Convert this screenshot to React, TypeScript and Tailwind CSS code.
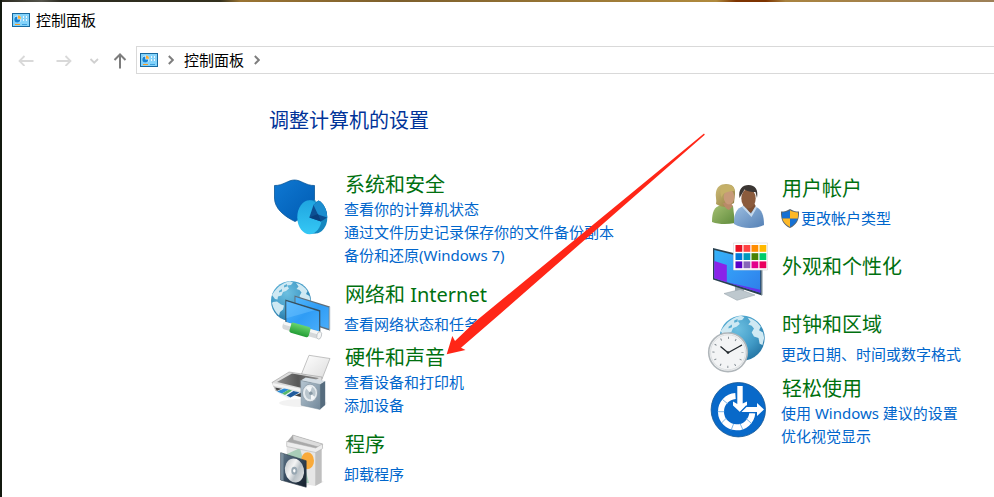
import type { ReactNode } from "react";

const tiles = [
  ["#e81123", "#ff4343", "#ff8c00", "#ffb900"],
  ["#0078d7", "#0099bc", "#498205", "#00cc6a"],
  ["#5a00c8", "#8764b8", "#e3008c", "#ea005e"],
];

const App = () => {
  return (
    <div className="relative min-h-screen overflow-hidden bg-[#13190f] pl-0.5 font-['Noto_Sans','Noto_Sans_CJK_SC',sans-serif] text-[15px] text-black">
      <div className="h-0.5 bg-[linear-gradient(90deg,#2b2a20_0%,#55544c_4%,#2b2a20_6%,#33301d_22%,#9a7433_24%,#7d5f2c_40%,#b08a3d_72%,#7d3300_74%,#7d3300_77%,#a98340_79%,#9d8058_100%)]" />
      <div className="min-h-[calc(100vh-2px)] bg-white">
        <header className="flex h-9 items-center gap-1.5 pl-2.5">
          <PanelIcon />
          <span className="leading-5">控制面板</span>
        </header>
        <Toolbar />
        <main className="pt-[34px]">
          <h1 className="pl-[267px] text-xl leading-[26px] text-[#003399]">
            调整计算机的设置
          </h1>
          <div className="mt-[37px] grid grid-cols-[1fr_289px] pl-[266px]">
            <div className="pt-px">
              <Category
                title="系统和安全"
                icon={<SecurityIcon />}
                links={[
                  "查看你的计算机状态",
                  "通过文件历史记录保存你的文件备份副本",
                  "备份和还原(Windows 7)",
                ]}
                className="items-start"
              />
              <Category
                title="网络和 Internet"
                icon={<NetworkIcon />}
                links={["查看网络状态和任务"]}
                className="mt-2.5 items-center"
              />
              <Category
                title="硬件和声音"
                icon={<HardwareIcon />}
                links={["查看设备和打印机", "添加设备"]}
                className="mt-1 items-center"
              />
              <Category
                title="程序"
                icon={<ProgramsIcon />}
                links={["卸载程序"]}
                className="mt-2.5 items-center"
              />
            </div>
            <div>
              <Category
                title="用户帐户"
                icon={<UsersIcon />}
                links={["更改帐户类型"]}
                shield
                className="items-center"
              />
              <Category
                title="外观和个性化"
                icon={<AppearanceIcon />}
                links={[]}
                className="items-center"
              />
              <Category
                title="时钟和区域"
                icon={<ClockIcon />}
                links={["更改日期、时间或数字格式"]}
                className="mt-2 items-center"
              />
              <Category
                title="轻松使用"
                icon={<EaseIcon />}
                links={["使用 Windows 建议的设置", "优化视觉显示"]}
                className="mt-[5px] items-center"
              />
            </div>
          </div>
        </main>
      </div>
      {/* red pointer drawn over the categories */}
      <svg
        className="pointer-events-none absolute top-[133px] left-[446px]"
        width="260"
        height="223"
        viewBox="446 133 260 223"
        fill="#ff2617"
      >
        <path d="M446.7 354.3 452.3 336 455 341 476 321 704 133.6 704.8 134.8 500 314 461 347.7 465.5 350Z" />
      </svg>
    </div>
  );
};
export default App;

const Toolbar = () => {
  return (
    <nav className="mt-2 flex h-7 items-stretch pl-2">
      <div className="mr-1 flex items-center gap-1.5">
        <button aria-label="后退" className="flex h-7 w-8 items-center justify-center">
          <svg width="16" height="12" viewBox="0 0 16 12" fill="none" stroke="#d9d9d9" strokeWidth="1.8">
            <path d="M15.5 7H1.5M6.5 2 1.5 7l5 5" />
          </svg>
        </button>
        <button aria-label="前进" className="flex h-7 w-8 items-center justify-center">
          <svg width="16" height="12" viewBox="0 0 16 12" fill="none" stroke="#d9d9d9" strokeWidth="1.8">
            <path d="M.5 7h14M9.5 2l5 5-5 5" />
          </svg>
        </button>
        <button aria-label="最近浏览的位置" className="flex h-7 w-4 items-center justify-center">
          <svg width="10" height="8" viewBox="0 0 10 8" fill="none" stroke="#d0d0d0" strokeWidth="1.8">
            <path d="m1.5 3 3.7 3.7L9 3" />
          </svg>
        </button>
        <button aria-label="上移" className="flex h-7 w-6 items-center justify-center">
          <svg width="14" height="18" viewBox="0 0 14 18" fill="none" stroke="#7d7d7d" strokeWidth="2">
            <path d="M7 17.500V4M1.500 9 7 3.500 12.500 9" />
          </svg>
        </button>
      </div>
      <div className="flex flex-1 items-center border border-r-0 border-[#d9d9d9] pb-px pl-[3px]">
        <PanelIcon />
        <Chevron />
        <button className="leading-5">控制面板</button>
        <Chevron />
      </div>
    </nav>
  );
};

const Chevron = () => {
  return (
    <svg className="mx-2.5 shrink-0" width="6" height="10" viewBox="0 0 6 10" fill="none" stroke="#7d7d7d" strokeWidth="1.9">
      <path d="m.8 1 4 4-4 4" />
    </svg>
  );
};

type CategoryProps = {
  title: string;
  icon: ReactNode;
  links: string[];
  shield?: boolean;
  className: string;
};
const Category = ({ title, icon, links, shield, className }: CategoryProps) => {
  return (
    <section className={`flex gap-3 ${className}`}>
      {icon}
      <div>
        <h2 className="pl-px text-xl leading-[26px] text-[#00700f]">
          <a href="#">{title}</a>
        </h2>
        {links.length > 0 && (
          <ul className={links.length === 1 ? "mt-[5px]" : ""}>
            {links.map((link) => (
              <li key={link} className="flex items-center gap-0.5 leading-[23px] whitespace-nowrap text-[#0066cc]">
                {shield && <UacShield />}
                <a href="#">{link}</a>
              </li>
            ))}
          </ul>
        )}
      </div>
    </section>
  );
};

const Icon = ({ children }: { children: ReactNode }) => {
  return (
    <svg className="shrink-0 overflow-visible" width="64" height="64" viewBox="0 0 64 64" aria-hidden="true">
      {children}
    </svg>
  );
};

const PanelIcon = () => {
  return (
    <svg className="shrink-0" width="18" height="14" viewBox="0 0 18 14" aria-hidden="true">
      <path fill="#17699f" d="M0 0h18v14H0z" />
      <path fill="#83d3fb" d="M1 1h16v12H1z" />
      <circle cx="5.800" cy="6" r="3.500" fill="#d9f2ff" />
      <path fill="#1583d3" d="M5.300 6.500V3.500a3 3 0 1 0 3 3z" />
      <path fill="#ffad33" d="M6 5.800V2.500a3.200 3.200 0 0 1 3 3.300z" />
      <path fill="#e8f8ff" d="M11 3h2v2h-2zM14 3h2v2h-2zM11 6h2v2h-2zM14 6h2v2h-2z" />
      <path fill="#3d9fdd" d="M12 3.500h1v1h-1zM15 3.500h1v1h-1zM12 6.500h1v1h-1zM15 6.500h1v1h-1zM10 11h5v1h-5z" />
      <path fill="#f59a23" d="M3 11h5v1H3z" />
    </svg>
  );
};

const UacShield = () => {
  return (
    <svg className="shrink-0" width="18" height="19" viewBox="0 0 18 19" aria-hidden="true">
      <path fill="#5b6670" d="M9 0c2.500 1.700 5.500 2.500 9 2.600C18.300 10.500 16 15.500 9 19 2 15.500-.3 10.500 0 2.600 3.500 2.500 6.500 1.700 9 0z" />
      <path fill="#1670d2" d="M9 1.300v8.200H1.300C.9 7.500.9 5.500 1 3.600 4 3.400 7 2.700 9 1.300zM9 9.500h7.700c-1 3.700-3.500 6.400-7.700 8.500z" />
      <path fill="#fdb827" d="M9 1.300c2 1.400 5 2.100 8 2.300.1 1.900.1 3.900-.3 5.900H9zM1.300 9.500H9V18c-4.200-2.100-6.700-4.800-7.700-8.500z" />
    </svg>
  );
};

const SecurityIcon = () => {
  return (
    <Icon>
      <defs>
        <linearGradient id="shield" x2="1" y2="1">
          <stop stopColor="#0f78d2" />
          <stop offset="1" stopColor="#005bb2" />
        </linearGradient>
        <linearGradient id="pie" x2="0" y2="1">
          <stop stopColor="#1fa5e0" />
          <stop offset="1" stopColor="#35c8f5" />
        </linearGradient>
      </defs>
      <path
        fill="url(#shield)"
        stroke="#0a5798"
        strokeWidth=".8"
        d="M6.500 13.500C15 13.800 20 8 26.500 8S38 13.800 46.500 13.500V27c0 10-9 17.500-19.500 22.500C15.500 44 6.500 36 6.500 26z"
      />
      <ellipse cx="47.500" cy="45.500" rx="11.800" ry="16" fill="#1587bf" />
      <path fill="#1587bf" d="M41 28.300h6.500v33L41 62z" />
      <ellipse cx="41.500" cy="45.300" rx="12.200" ry="17" fill="url(#pie)" />
      <path fill="#0c4f92" d="M41.300 45.500 45.500 33l5-4.500c5 2.500 8.500 9 8.700 17L53 49.500z" />
      <path fill="#1b8dcf" d="M45.500 33l5-4.500c5 2.500 8.500 9 8.700 17L50 42.500z" />
      <path fill="#083f7d" d="M41.300 45.500 50 42l3 7.500z" />
    </Icon>
  );
};

// shared by the network and clock icons, drawn in a 40x40 box
const Globe = ({ id }: { id: string }) => {
  return (
    <>
      <defs>
        <radialGradient id={id} cx=".4" cy=".3" r=".75">
          <stop stopColor="#6cbfe0" />
          <stop offset=".6" stopColor="#419ac6" />
          <stop offset="1" stopColor="#2473a2" />
        </radialGradient>
      </defs>
      <circle cx="20" cy="20" r="20" fill={`url(#${id})`} />
      <g fill="#cfe9f3">
        <path d="M6 7.500C9 4 14 1 19 .2l3 1.300-2 2.500-4 .5 2 3-3 2.500-3 1-1.500 3.500-3.500 1-.5 3-2.500-.5-3-4C2.500 11.500 4 9.500 6 7.500z" />
        <path d="m2 21 4-.5 4 3 3 1-1 4-3 2.500-1 3.500C4.500 31.500 2 27 1 22z" />
        <path d="M25 2c5 1 9 4 11.500 8L35 13l3.500 2 1 5-1.500 6-2.500-1-1-5-4-1.500-2-3.500 2-3.500-2-2.500-3-1 2-2.500z" />
      </g>
      <path fill="#5aaed2" d="m13 4.500 3-1.500v2.500l-3 1zM8 10l3-2v2.500l-3 1z" />
    </>
  );
};

const NetworkIcon = () => {
  return (
    <Icon>
      <defs>
        <linearGradient id="screen" x2="1" y2="1">
          <stop stopColor="#51b6fc" />
          <stop offset=".5" stopColor="#2f9cf5" />
          <stop offset="1" stopColor="#48adfa" />
        </linearGradient>
        <linearGradient id="tube" x2="0" y2="1">
          <stop stopColor="#68d46d" />
          <stop offset="1" stopColor="#239d35" />
        </linearGradient>
      </defs>
      <g transform="translate(3 4)">
        <Globe id="globe-net" />
      </g>
      <path fill="#5f6f7b" d="m26.500 18.500 35.500 11V53.500l-3-.8-32.500-11z" />
      <path fill="url(#screen)" d="m27.500 20 33.300 10.500v21.200l-33.300-10.500z" />
      <path fill="#c3cdd5" d="m61.300 29.500 1 .3v23l-1 .5z" />
      <path fill="#37505f" d="m17.300 22.500 35 10.800v23.200L17.300 46z" />
      <path fill="url(#screen)" d="m18.400 24.200 32.700 10.200v20.400l-32.700-9.900z" />
      <path fill="#6fc4ff" opacity=".45" d="m18.400 24.200 28.200 9-28.200 8z" />
      <g transform="rotate(16 33 53)">
        <rect x="14" y="49.500" width="40" height="7.500" rx="3" fill="#d5d8da" />
        <rect x="14" y="49.500" width="40" height="3" rx="1.500" fill="#f5f6f6" />
        <rect x="22" y="48" width="20" height="10.500" rx="2" fill="url(#tube)" />
        <ellipse cx="52" cy="53.200" rx="2.300" ry="3.800" fill="#f5f5f5" stroke="#b5babd" strokeWidth=".7" />
      </g>
    </Icon>
  );
};

const HardwareIcon = () => {
  return (
    <Icon>
      <defs>
        <linearGradient id="paper" x2="1" y2="1">
          <stop stopColor="#fff" />
          <stop offset="1" stopColor="#dcdcdc" />
        </linearGradient>
        <linearGradient id="lid" x2="1">
          <stop stopColor="#8a8a8a" />
          <stop offset=".5" stopColor="#585858" />
          <stop offset="1" stopColor="#969696" />
        </linearGradient>
        <linearGradient id="speaker" x2="1" y2="1">
          <stop stopColor="#b6c6d2" />
          <stop offset="1" stopColor="#73899b" />
        </linearGradient>
      </defs>
      <ellipse cx="35" cy="54" rx="24" ry="4" fill="#000" opacity=".05" />
      <path fill="url(#paper)" stroke="#aaa" strokeWidth=".7" d="M41 6.300 62 9.500 54 30l-20.500-5z" />
      <path fill="#dcdcdc" stroke="#8f8f8f" strokeWidth=".5" d="M4 33.500 21 23l33 5-1 12-18 8-27-6z" />
      <path fill="url(#lid)" d="m9 33 15-8.500 27 4.500-17 10z" />
      <path fill="#f4f4f4" d="m4.500 34 29 6v2.500l-29-6z" />
      <path fill="#444" d="m7 38.500 26 5v4.500l-24-6z" />
      <path fill="#e7f1f7" d="m7.500 42.500 8-3.500 18 4.500-13 6z" />
      <path fill="#2b8bd5" d="m9 42.500 7-3 5 1-7 4z" />
      <path fill="#58b86a" d="m14 44.500 7-4 3 1-7 4.500z" />
      <path fill="#205c9d" d="m18.500 46.500 7-4.500 6 1.500-9 5z" />
      <path fill="#d4dde4" d="m32.700 31.500 5-3 19.500 3.500-5.200 3.500z" />
      <path fill="#566c7e" d="m52 35.500 5.200-3.500v24L52 60.500z" />
      <path fill="url(#speaker)" stroke="#7d909f" strokeWidth=".5" d="M32.700 31.500 52 35.500v25l-18.800-4.300z" />
      <ellipse cx="42" cy="44" rx="7.500" ry="8.800" fill="#e5ebef" stroke="#8797a3" strokeWidth=".7" />
      <ellipse cx="42.300" cy="44" rx="5.300" ry="6.500" fill="#b9c5cd" />
      <path fill="#f4f7f9" d="m42 44-4-5c2-2 5-2 6-1zM43 45l4 3c-1 2-3 3-4 2.500z" />
      <circle cx="42.800" cy="44.300" r="1.800" fill="#8798a4" />
    </Icon>
  );
};

const ProgramsIcon = () => {
  return (
    <Icon>
      <defs>
        <linearGradient id="disc" x2="1" y2="1">
          <stop stopColor="#b9bfc3" />
          <stop offset=".4" stopColor="#f4f4f4" />
          <stop offset=".6" stopColor="#b8c0c6" />
          <stop offset="1" stopColor="#ececec" />
        </linearGradient>
        <linearGradient id="case" x2="1" y2="1">
          <stop stopColor="#647b8e" />
          <stop offset=".5" stopColor="#33465a" />
          <stop offset="1" stopColor="#141e29" />
        </linearGradient>
      </defs>
      <path fill="#000" opacity=".06" d="m38 59 18-4-3-2-15 4z" />
      <path fill="#e6e6e6" d="m18.700 16 28.500 6.300V59l-28.500-5z" />
      <path fill="#bfbfbf" d="m47.200 22.300 6.500-3.300v36.500L47.200 59z" />
      <path fill="#a9cdb8" d="m32 21-13 6v14l19 15h3z" />
      <ellipse cx="39.500" cy="33.700" rx="6.500" ry="8.500" fill="#f9aa3a" />
      <path fill="#a9a9a9" d="m18.700 15 6-7 30 9-7.500 5.500z" />
      <path fill="#dcdcdc" stroke="#a2a2a2" strokeWidth=".5" d="m24.700 8 30 9-.5 4-29-8z" />
      <path fill="#ededed" stroke="#aaa" strokeWidth=".5" d="m18.700 14.500 29 6.500 6.500-4 .5 4.500-7 4-29-6z" />
      <path fill="url(#case)" stroke="#2b3947" strokeWidth=".6" d="m12.700 25.700 25.500 8v26.500L12.700 53z" />
      <path fill="#7a8d9c" d="m13 26 2.500.8v27L13 53z" />
      <ellipse cx="26.500" cy="43.500" rx="9.500" ry="12" fill="url(#disc)" transform="rotate(-12 26.500 43.500)" />
      <ellipse cx="26.300" cy="43.700" rx="3" ry="4" fill="#98a7b2" />
      <ellipse cx="26.300" cy="43.700" rx="1.200" ry="1.700" fill="#fff" />
    </Icon>
  );
};

const UsersIcon = () => {
  return (
    <Icon>
      <defs>
        <linearGradient id="woman" x2="1" y2="1">
          <stop stopColor="#a6c173" />
          <stop offset="1" stopColor="#5f8b3c" />
        </linearGradient>
        <linearGradient id="man" x2="1" y2="1">
          <stop stopColor="#9bbde0" />
          <stop offset="1" stopColor="#5480b5" />
        </linearGradient>
        <linearGradient id="hair" x2="1" y2="1">
          <stop stopColor="#cfbd78" />
          <stop offset="1" stopColor="#8d7b3f" />
        </linearGradient>
      </defs>
      <path fill="url(#woman)" d="M7 51c0-10 2-15 9-17l12 1 2 17c-8 1.500-16 1.500-23-1z" />
      <path fill="url(#hair)" d="M11 33c1-4-1-8 0-12 1-5 4-8 10-8 7 0 9.500 4 9 10l-1 9-8 4c-4 0-7-1-10-3z" />
      <path fill="#b98a69" d="m18 32 7-1 3 4-4 4c-3-1-5-4-6-7z" />
      <ellipse cx="24" cy="26" rx="5.300" ry="7.500" fill="#c79a79" />
      <path fill="#c5b068" d="M17 27c0-5 5-7 12.500-7 0-5-3-6.500-8-6-6 0-8 6-4.500 13z" />
      <path fill="url(#man)" d="M29 53c0-10 2-16 10-18l12 1c6 2 8 9 8 18-8 4-22 4-30-1z" />
      <path fill="#7d5135" d="m38 34 11-2 2 3.500-5 6.500c-3-1-7-5-8-8z" />
      <path fill="#c5d9ec" d="m37 36 1.500-2 7.500 9 4.500-8 1.500 1.500-5.500 9.500z" />
      <ellipse cx="43.500" cy="27.500" rx="7.200" ry="10" fill="#8b5b3c" />
      <path fill="#3b3633" d="M34.500 27c-1.500-9 3-13 9-13 7 0 10 5 8.500 13l-1.500-6c-4 0-8-.5-11-2.500-1.500 3-3 5-5 8.500z" />
    </Icon>
  );
};

const AppearanceIcon = () => {
  return (
    <Icon>
      <defs>
        <linearGradient id="wall" x2="1" y2="1">
          <stop stopColor="#35b3fa" />
          <stop offset=".6" stopColor="#3292f3" />
          <stop offset="1" stopColor="#2e7ee8" />
        </linearGradient>
      </defs>
      <path fill="#9aa6ae" d="M30 50h9v8h-9z" />
      <path fill="#bec8ce" stroke="#909da5" strokeWidth=".5" d="m19 58.500 16-4 15 5.500-18 5.300z" />
      <path fill="#2a4150" d="m8 13 49 12v35.500L8 44.500z" />
      <path fill="#b9c5cd" d="m56.500 25 1.500-.5V60l-1.500.5z" />
      <path fill="url(#wall)" d="m9.300 15 46 11.500v31.300l-46-14.500z" />
      <path fill="#8a23e8" d="m9.300 26 12.500 4v17.200l-12.500-4z" />
      <path fill="#6633ea" d="m21.800 47.200 33.500 10.600v-3z" />
      <path fill="#fff" stroke="#d5d5d5" strokeWidth=".6" d="M28.500 8h34v27h-34z" />
      {tiles.map((row, y) =>
        row.map((color, x) => (
          <rect key={color} x={30.500 + x * 8} y={10 + y * 8.200} width="6.800" height="6.800" fill={color} />
        )),
      )}
    </Icon>
  );
};

const ClockIcon = () => {
  return (
    <Icon>
      <g transform="translate(14.500 8.500) scale(1.130)">
        <Globe id="globe-clock" />
      </g>
      <circle cx="23" cy="45.300" r="19.300" fill="#f3f4f5" stroke="#b0b6ba" strokeWidth="1.600" />
      <circle cx="23" cy="45.300" r="17.500" fill="none" stroke="#dde0e2" />
      <circle cx="23" cy="45.300" r="14.500" fill="none" stroke="#7a838a" strokeWidth="2.200" strokeDasharray=".9 6.692" strokeDashoffset=".45" />
      <path fill="none" stroke="#22282d" strokeWidth="1.300" d="m15.500 39.500 7.500 6.300L37 38" />
      <circle cx="23" cy="45.500" r="1.300" fill="#22282d" />
    </Icon>
  );
};

const EaseIcon = () => {
  return (
    <Icon>
      <circle cx="33.300" cy="29.700" r="27.200" fill="#0869c9" stroke="#145592" strokeWidth=".8" />
      <path fill="none" stroke="#fff" strokeWidth="6" d="M30.500 16a15.700 15.700 0 1 0 16.800 17" />
      <path stroke="#5ba2df" strokeWidth=".8" d="M12.500 31.700h7M16.500 43l5-5M26 50.500l2.500-6.500M38 50l-3-6.500M17.500 19.500l5.500 4.500M46.500 43.500l-5.500-5" />
      <path fill="#fff" d="M32.300 6h5.400v17.500l4.300-2v4L35 32l-7-6.500v-4l4.300 2.500z" />
      <path fill="#0869c9" d="m34 32.800 7-7.300h10V21l9 8.500-9 8.500v-4.700H35z" />
      <path fill="#fff" d="m36.500 32 5-5H52v-4l7 6.500-7 6.500v-4z" />
    </Icon>
  );
};
